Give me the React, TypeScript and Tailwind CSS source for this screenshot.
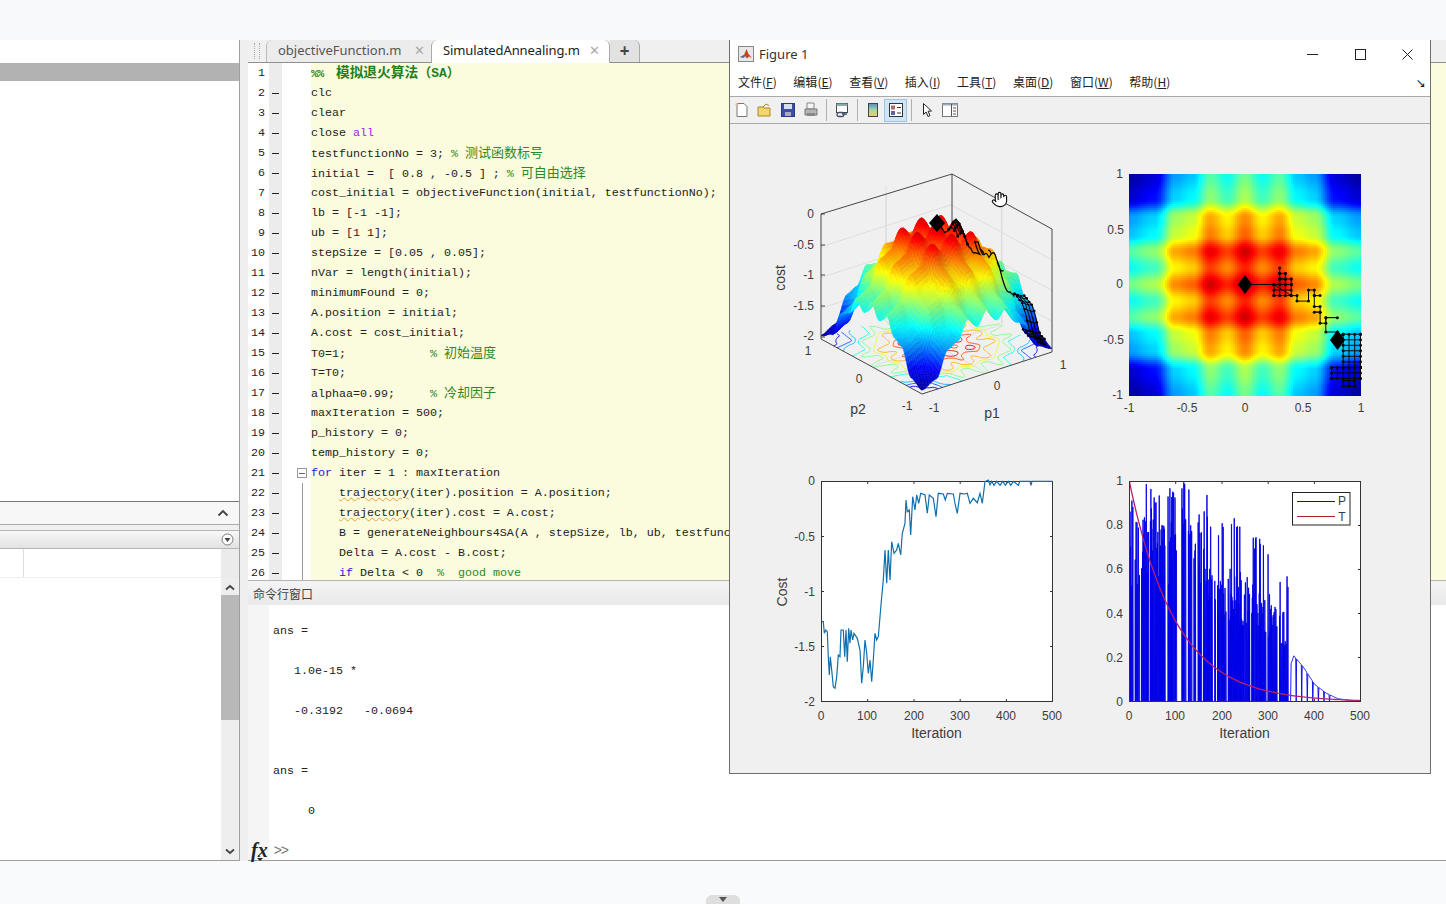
import React from "react";
import { Hand } from "lucide-react";

const clamp = (a: number) => Math.max(0, Math.min(1, a));
const jet = (v: number, s = 1) => {
  const r = clamp(1.5 - Math.abs(4 * v - 3));
  const g = clamp(1.5 - Math.abs(4 * v - 2));
  const b = clamp(1.5 - Math.abs(4 * v - 1));
  return `rgb(${Math.round(r * 255 * s)},${Math.round(g * 255 * s)},${Math.round(b * 255 * s)})`;
};
const ctrl: [number, number][] = [[0, 0.5], [0.15, 0.39], [0.3, 0.47], [0.45, 0.32], [0.6, 0.28], [0.78, 0.07], [1, 0.015]];
const h = (t0: number) => {
  const t = Math.min(1, Math.abs(t0));
  let i = 0;
  while (i < ctrl.length - 2 && t > ctrl[i + 1][0]) i++;
  const [a, av] = ctrl[i];
  const [b, bv] = ctrl[i + 1];
  const u = (t - a) / (b - a);
  const s = u * u * (3 - 2 * u);
  return av + (bv - av) * s;
};
const f = (x: number, y: number) => h(x) + h(y);
const proj = (p1: number, p2: number, v: number): [number, number] => [
  922 + ((p1 + 1) / 2) * 130 - ((p2 + 1) / 2) * 101,
  394 - ((p1 + 1) / 2) * 42 - ((p2 + 1) / 2) * 55 - v * 123,
];
const pts = (a: [number, number][]) => a.map((p) => `${p[0].toFixed(1)},${p[1].toFixed(1)}`).join(" ");

function buildSurface() {
  const N = 80;
  const out: { d: string; c: string }[] = [];
  for (let i = N - 1; i >= 0; i--) {
    for (let j = N - 1; j >= 0; j--) {
      const x0 = -1 + (2 * i) / N, x1 = -1 + (2 * (i + 1)) / N;
      const y0 = -1 + (2 * j) / N, y1 = -1 + (2 * (j + 1)) / N;
      const a = f(x0, y0), b = f(x1, y0), c = f(x1, y1), d = f(x0, y1);
      const m = (a + b + c + d) / 4;
      const dx = (b + c - a - d) / 2 / (x1 - x0);
      const dy = (c + d - a - b) / 2 / (y1 - y0);
      const shade = clamp(0.92 + 0.14 * dx - 0.08 * dy);
      out.push({ d: pts([proj(x0, y0, a), proj(x1, y0, b), proj(x1, y1, c), proj(x0, y1, d)]), c: jet(m * 0.95, 0.72 + 0.28 * shade) });
    }
  }
  return out;
}
function buildContours() {
  const N = 110;
  const out: { d: string; c: string }[] = [];
  for (let k = 1; k < 10; k++) {
    const L = k / 10;
    let d = "";
    for (let i = 0; i < N; i++) for (let j = 0; j < N; j++) {
      const x0 = -1 + (2 * i) / N, x1 = -1 + (2 * (i + 1)) / N;
      const y0 = -1 + (2 * j) / N, y1 = -1 + (2 * (j + 1)) / N;
      const c = [[x0, y0], [x1, y0], [x1, y1], [x0, y1]].map(([x, y]) => ({ x, y, v: f(x, y) }));
      const cross: [number, number][] = [];
      for (let e = 0; e < 4; e++) {
        const A = c[e], B = c[(e + 1) % 4];
        if (A.v < L !== B.v < L) {
          const u = (L - A.v) / (B.v - A.v);
          cross.push(proj(A.x + (B.x - A.x) * u, A.y + (B.y - A.y) * u, 0));
        }
      }
      if (cross.length >= 2) d += `M${cross[0][0].toFixed(1)} ${cross[0][1].toFixed(1)}L${cross[1][0].toFixed(1)} ${cross[1][1].toFixed(1)}`;
    }
    out.push({ d, c: jet(L) });
  }
  return out;
}
function buildHeat() {
  const out: { x: number; y: number; c: string }[] = [];
  for (let py = 174; py < 395; py += 2) for (let px = 1129; px < 1361; px += 2) {
    const x = ((px + 1 - 1129) / 232) * 2 - 1;
    const y = 1 - ((py + 1 - 174) / 221) * 2;
    out.push({ x: px, y: py, c: jet(f(x, y) * 0.95) });
  }
  return out;
}
const route: [number, number][] = [[0, 0], [0.25, 0], [0.4, -0.1], [0.45, -0.1], [0.45, -0.15], [0.55, -0.15], [0.55, -0.05], [0.6, -0.05], [0.6, -0.1], [0.65, -0.1], [0.6, -0.1], [0.6, -0.2], [0.65, -0.2], [0.65, -0.25], [0.6, -0.25], [0.65, -0.25], [0.65, -0.35], [0.7, -0.35], [0.7, -0.3], [0.8, -0.3], [0.7, -0.3], [0.7, -0.43], [0.8, -0.43], [0.8, -0.5], [0.85, -0.45]];
type Seg = [[number, number], [number, number]];
const grid = (x0: number, x1: number, y0: number, y1: number) => {
  const s: Seg[] = [];
  for (let x = x0; x <= x1 + 1e-6; x += 0.05) s.push([[x, y0], [x, y1]]);
  for (let y = y0; y <= y1 + 1e-6; y += 0.05) s.push([[x0, y], [x1, y]]);
  return s;
};
const segs: Seg[] = [
  ...grid(0.25, 0.4, -0.1, 0),
  ...grid(0.3, 0.4, 0, 0.05),
  ...grid(0.3, 0.35, 0.05, 0.1),
  [[0.3, 0.1], [0.3, 0.15]],
  ...grid(0.85, 1, -0.75, -0.45),
  ...grid(0.75, 1, -0.85, -0.75),
  ...grid(0.85, 0.95, -0.92, -0.85),
];
const segDots: [number, number][] = [];
segs.forEach(([a, b]) => { segDots.push(a, b); });
const h2 = (p: [number, number]): [number, number] => [1245 + p[0] * 115.5, 284.5 - p[1] * 110.5];
const h3 = (p: [number, number]): [number, number] => proj(p[0], p[1], f(p[0], p[1]));
const split = (q: [number, number], p: [number, number]) => {
  const a: [number, number][] = [q];
  for (let k = 1; k <= 4; k++) a.push([q[0] + ((p[0] - q[0]) * k) / 4, q[1] + ((p[1] - q[1]) * k) / 4]);
  return a;
};
const route3 = route.slice(1).flatMap((p, i) => split(route[i], p));
const seg3 = segs.map(([a, b]) => split(a, b));
const seg2d = segs.map(([a, b]) => { const p = h2(a), q = h2(b); return `M${p[0].toFixed(1)} ${p[1].toFixed(1)}L${q[0].toFixed(1)} ${q[1].toFixed(1)}`; }).join("");
const costZoom: [number, number][] = [[155, 455], [160, 455], [163, 490], [167, 480], [172, 485], [175, 560], [178, 615], [181, 560], [185, 600], [190, 650], [195, 655], [200, 620], [205, 555], [210, 560], [213, 480], [220, 480], [224, 560], [228, 480], [232, 575], [236, 475], [240, 520], [243, 480], [248, 510], [252, 490], [262, 505], [270, 540], [275, 640], [280, 590], [285, 510], [290, 550], [295, 610], [300, 570], [305, 635], [310, 570], [315, 490], [320, 510], [325, 500], [330, 440], [335, 380], [340, 330], [345, 240], [350, 340], [355, 240], [360, 330], [365, 215], [372, 250], [380, 240], [385, 220], [392, 255], [397, 190], [405, 160], [408, 90], [412, 125], [418, 120], [422, 195], [428, 80], [435, 120], [440, 75], [446, 100], [452, 70], [465, 75], [472, 130], [478, 75], [490, 85], [498, 140], [505, 70], [520, 72], [526, 90], [532, 70], [550, 72], [556, 105], [562, 130], [570, 70], [585, 72], [592, 70], [600, 100], [610, 85], [622, 98], [630, 70], [637, 100], [645, 35], [655, 30], [660, 45], [665, 34], [672, 46], [680, 34], [690, 46], [698, 34], [706, 46], [715, 34], [722, 46], [730, 34], [745, 46], [750, 34], [780, 34], [783, 46], [786, 34], [848, 34]];
const envC: [number, number][] = [[0, 1], [170, 1], [180, 0.76], [205, 0.86], [230, 0.84], [260, 0.78], [285, 0.74], [300, 0.69], [320, 0.61], [343, 0.57], [345, 0.15], [355, 0.21], [375, 0.16], [400, 0.08], [425, 0.04], [450, 0.015], [500, 0]];
const env = (i: number) => {
  for (let k = 0; k < envC.length - 1; k++) if (i <= envC[k + 1][0]) {
    const u = (i - envC[k][0]) / (envC[k + 1][0] - envC[k][0]);
    return envC[k][1] + (envC[k + 1][1] - envC[k][1]) * u;
  }
  return 0;
};
function buildP() {
  let seed = 98765;
  const r = () => { seed = (seed * 1664525 + 1013904223) % 4294967296; return seed / 4294967296; };
  const a: [number, number][] = [[1129.5, 702]];
  const X = (i: number) => 1129.5 + (i / 500) * 231.5;
  const Y = (v: number) => 702 - v * 220;
  let i = 0;
  while (i < 345) {
    const q = r();
    if (q < 0.1) {
      const run = 3 + Math.floor(r() * 3);
      a.push([X(i), Y(0)], [X(i + run), Y(0)]);
      i += run;
      continue;
    }
    let v: number;
    if (q < 0.32) v = env(i) * (0.9 + 0.1 * r());
    else v = env(i) * (0.5 + 0.35 * r()) * (i < 170 ? 1.05 : 0.85);
    a.push([X(i), Y(v)], [X(i + 0.5), Y(v)], [X(i + 1), Y(0)]);
    i += 1 + Math.floor(r() * 1.6);
  }
  for (; i <= 500; i += 1) {
    const drop = i < 435 && i % 12 < 1;
    a.push([X(i), Y(drop ? 0 : env(i))]);
  }
  return a;
}
const surface = buildSurface();
const contours = buildContours();
const heat = buildHeat();
const pLine = buildP();
const tLine: [number, number][] = Array.from({ length: 101 }, (_, k) => [1129.5 + (k / 100) * 231.5, 702 - Math.pow(0.99, k * 5) * 220]);

const Tick = ({ x, y, t, a = "middle" }: { x: number; y: number; t: string; a?: "middle" | "end" | "start" }) => (
  <text x={x} y={y + 4} textAnchor={a} fontSize={12} fill="#3c3c3c" fontFamily="'Liberation Sans', sans-serif">{t}</text>
);
const Label = ({ x, y, t, rot }: { x: number; y: number; t: string; rot?: boolean }) => (
  <text x={x} y={y} textAnchor="middle" fontSize={14} fill="#3c3c3c" fontFamily="'Liberation Sans', sans-serif" transform={rot ? `rotate(-90 ${x} ${y})` : undefined}>{t}</text>
);

function Plots() {
  return (
    <svg viewBox="730 124 700 649" className="w-[700px] h-[649px] block">
      <defs><filter id="soft" x="-5%" y="-5%" width="110%" height="110%"><feGaussianBlur stdDeviation="0.6" /></filter></defs>
      {/* 3D wall grid */}
      <g stroke="#d9d9d9" strokeWidth="0.8" fill="none">
        {[0.25, 0.5, 0.75].map((v) => (
          <polyline key={v} points={pts([proj(-1, 1, v * 1), proj(1, 1, v), proj(1, -1, v)])} />
        ))}
        <line x1="886" y1="186" x2="886" y2="318" />
        <line x1="1002" y1="202" x2="1002" y2="324" />
        <polyline points={pts([proj(0, -1, 0), proj(0, 1, 0), proj(0, 1, 1)])} />
        <polyline points={pts([proj(-1, 0, 0), proj(1, 0, 0), proj(1, 0, 1)])} />
      </g>
      {contours.map((c, i) => <path key={i} d={c.d} stroke={c.c} strokeWidth="0.9" fill="none" />)}
      <g stroke="#333" strokeWidth="0.9" fill="none">
        <polyline points="821,339 821,214 952,174 1052,229 1052,352" />
        <line x1="952" y1="174" x2="952" y2="296" />
        <polyline points="821,339 922,394 1052,352" />
      </g>
      <g filter="url(#soft)">
        {surface.map((s, i) => <polygon key={i} points={s.d} fill={s.c} stroke={s.c} strokeWidth="0.5" />)}
      </g>
      <polyline points={pts(route3.map(h3))} fill="none" stroke="#000" strokeWidth="1.2" />
      {seg3.map((s, i) => <polyline key={i} points={pts(s.map(h3))} fill="none" stroke="#000" strokeWidth="1" />)}
      {segDots.map((p, i) => { const q = h3(p); return <circle key={i} cx={q[0]} cy={q[1]} r="1.2" fill="#000" />; })}
      <polygon points="937,214 945,223 937,232 929,223" fill="#000" />
      <g stroke="#333" strokeWidth="0.9">
        {[214, 245, 275, 306, 337].map((y) => <line key={y} x1="821" y1={y} x2="825" y2={y + 0} />)}
      </g>
      <Hand x={991} y={191} width={17} height={17} stroke="#111" fill="#fff" strokeWidth={1.6} />
      <Tick x={814} y={214} t="0" a="end" /><Tick x={814} y={245} t="-0.5" a="end" /><Tick x={814} y={275} t="-1" a="end" /><Tick x={814} y={306} t="-1.5" a="end" /><Tick x={814} y={336} t="-2" a="end" />
      <Label x={785} y={278} t="cost" rot />
      <Tick x={808} y={351} t="1" /><Tick x={859} y={379} t="0" /><Tick x={907} y={406} t="-1" /><Tick x={934} y={408} t="-1" /><Tick x={997} y={386} t="0" /><Tick x={1063} y={365} t="1" />
      <Label x={858} y={414} t="p2" /><Label x={992} y={418} t="p1" />

      {/* Heat map */}
      <g shapeRendering="crispEdges">
        {heat.map((r, i) => <rect key={i} x={r.x} y={r.y} width="2" height="2" fill={r.c} />)}
      </g>
      <polyline points={pts(route.map(h2))} fill="none" stroke="#0a0a0a" strokeWidth="1" />
      <path d={seg2d} fill="none" stroke="#0a0a0a" strokeWidth="1" />
      {[...route, ...segDots].map((p, i) => { const q = h2(p); return <circle key={i} cx={q[0]} cy={q[1]} r="1.5" fill="#0a0a0a" />; })}
      <polygon points="1245,275 1252,284.5 1245,294 1238,284.5" fill="#000" />
      <polygon points="1337.5,330 1345,340 1337.5,350 1330,340" fill="#000" />
      <Tick x={1123} y={174} t="1" a="end" /><Tick x={1124} y={230} t="0.5" a="end" /><Tick x={1123} y={284} t="0" a="end" /><Tick x={1124} y={340} t="-0.5" a="end" /><Tick x={1123} y={395} t="-1" a="end" />
      <Tick x={1129} y={408} t="-1" /><Tick x={1187} y={408} t="-0.5" /><Tick x={1245} y={408} t="0" /><Tick x={1303} y={408} t="0.5" /><Tick x={1361} y={408} t="1" />

      {/* Cost */}
      <rect x="821.5" y="481.5" width="231" height="220" fill="#fff" stroke="#333" strokeWidth="1" />
      <g stroke="#333" strokeWidth="1">
        {[867.7, 914, 960.2, 1006.4].map((x) => <g key={x}><line x1={x} y1="701" x2={x} y2="699" /><line x1={x} y1="482" x2={x} y2="484" /></g>)}
        {[536.5, 591.5, 646.5].map((y) => <g key={y}><line x1="822" y1={y} x2="824" y2={y} /><line x1="1052" y1={y} x2="1050" y2={y} /></g>)}
      </g>
      <polyline points={pts(costZoom.map(([x, y]) => [770 + x / 3, 470 + y / 3] as [number, number]))} fill="none" stroke="#0f70b0" strokeWidth="1.2" />
      <Tick x={815} y={481} t="0" a="end" /><Tick x={815} y={537} t="-0.5" a="end" /><Tick x={815} y={592} t="-1" a="end" /><Tick x={815} y={647} t="-1.5" a="end" /><Tick x={815} y={702} t="-2" a="end" />
      {[["0", 821], ["100", 867], ["200", 914], ["300", 960], ["400", 1006], ["500", 1052]].map(([t, x]) => <Tick key={t} x={Number(x)} y={716} t={String(t)} />)}
      <Label x={787} y={592} t="Cost" rot /><Label x={936.5} y={738} t="Iteration" />

      {/* P / T */}
      <rect x="1129.5" y="481.5" width="231" height="220" fill="#fff" />
      <svg x="1129.5" y="481.5" width="231" height="220" viewBox="1129.5 481.5 231 220">
        <polyline points={pts(pLine)} fill="none" stroke="#0000e6" strokeWidth="0.9" />
        <polyline points={pts(tLine)} fill="none" stroke="#b8206a" strokeWidth="1.3" />
      </svg>
      <rect x="1129.5" y="481.5" width="231" height="220" fill="none" stroke="#333" strokeWidth="1" />
      <g stroke="#333" strokeWidth="1">
        {[1175.7, 1222, 1268.2, 1314.4].map((x) => <g key={x}><line x1={x} y1="701" x2={x} y2="699" /><line x1={x} y1="482" x2={x} y2="484" /></g>)}
        {[525.5, 569.5, 613.5, 657.5].map((y) => <line key={y} x1="1360" y1={y} x2="1358" y2={y} />)}
      </g>
      <rect x="1292.5" y="492.5" width="57.5" height="32.5" fill="#fff" stroke="#222" strokeWidth="1" />
      <line x1="1297" y1="501.5" x2="1335" y2="501.5" stroke="#1c1c50" strokeWidth="1" />
      <line x1="1297" y1="516.5" x2="1335" y2="516.5" stroke="#b0202a" strokeWidth="1" />
      <Tick x={1342} y={501} t="P" /><Tick x={1342} y={517} t="T" />
      {[["1", 481], ["0.8", 525], ["0.6", 569], ["0.4", 614], ["0.2", 658], ["0", 702]].map(([t, y]) => <Tick key={String(t)} x={1123} y={Number(y)} t={String(t)} a="end" />)}
      {[["0", 1129], ["100", 1175], ["200", 1222], ["300", 1268], ["400", 1314], ["500", 1360]].map(([t, x]) => <Tick key={String(t)} x={Number(x)} y={716} t={String(t)} />)}
      <Label x={1244.5} y={738} t="Iteration" />
    </svg>
  );
}

type Part = [string, string?];
const G = "text-[#2a8a2a]", K = "text-[#1a1ae6]", P = "text-[#a020f0]";
const code: Part[][] = [
  [["%%  ", `text-[#1f7f1f] font-bold tracking-[-0.75px]`], ["模拟退火算法", `text-[#1f7f1f] font-bold cjkb`], ["（", `text-[#1f7f1f] font-bold cjk`], ["SA", `text-[#1f7f1f] font-bold text-[13px]`], ["）", `text-[#1f7f1f] font-bold cjk`]],
  [["clc"]], [["clear"]], [["close "], ["all", P]],
  [["testfunctionNo = 3; "], ["% ", G], ["测试函数标号", `${G} cjk`]],
  [["initial =  [ 0.8 , -0.5 ] ; "], ["% ", G], ["可自由选择", `${G} cjk`]],
  [["cost_initial = objectiveFunction(initial, testfunctionNo);"]],
  [["lb = [-1 -1];"]], [["ub = [1 1];"]], [["stepSize = [0.05 , 0.05];"]], [["nVar = length(initial);"]],
  [["minimumFound = 0;"]], [["A.position = initial;"]], [["A.cost = cost_initial;"]],
  [["T0=1;            "], ["% ", G], ["初始温度", `${G} cjk`]],
  [["T=T0;"]],
  [["alphaa=0.99;     "], ["% ", G], ["冷却因子", `${G} cjk`]],
  [["maxIteration = 500;"]], [["p_history = 0;"]], [["temp_history = 0;"]],
  [["for", K], [" iter = 1 : maxIteration"]],
  [["    "], ["trajectory", "wavy"], ["(iter).position = A.position;"]],
  [["    "], ["trajectory", "wavy"], ["(iter).cost = A.cost;"]],
  [["    B = generateNeighbours4SA(A , stepSize, lb, ub, testfunctionNo);"]],
  [["    Delta = A.cost - B.cost;"]],
  [["    "], ["if", K], [" Delta < 0  "], ["%  good move", G]],
];
const mono = "font-['Liberation_Mono','Noto_Sans_CJK_SC',monospace] text-[11.67px]";

function Part({ p }: { p: Part }) {
  const c = p[1] ?? "";
  if (c === "wavy") return <span className="underline decoration-wavy decoration-[#e8a33a] decoration-1">{p[0]}</span>;
  if (c.includes("cjkb")) return <span className={`${c.replace("cjkb", "")} text-[13.7px]`}>{p[0]}</span>;
  if (c.includes("cjk")) return <span className={`${c.replace("cjk", "")} text-[13px]`}>{p[0]}</span>;
  return <span className={c}>{p[0]}</span>;
}

function Editor() {
  return (
    <div className="h-[540px] flex flex-col overflow-hidden">
      <div className="h-[23px] shrink-0 flex bg-[#f0f0f0] border-b border-[#8f8f8f] font-['Noto_Sans',sans-serif] text-[13px] text-[#333] leading-[21px]">
        <div className="w-[18px] flex items-center justify-center"><div className="w-[6px] h-[16px] border-x border-dotted border-[#aaa]" /></div>
        <div className="w-[165px] pl-[11px] flex justify-between pr-[6px] border-l border-[#bbb] rounded-tl-md bg-[#ececec] text-[#555]"><span>objectiveFunction.m</span><span className="text-[#aaa]">✕</span></div>
        <div className="w-[179px] pl-[11px] pr-[9px] flex justify-between bg-white border-x border-[#aaa] rounded-t-md h-[23px] text-[#222]"><span className="tracking-[-0.1px]">SimulatedAnnealing.m</span><span className="text-[#aaa]">✕</span></div>
        <div className="w-[30px] text-center bg-[#e2e2e2] border-r border-[#aaa] rounded-tr-md text-[17px] font-bold text-[#444]">+</div>
      </div>
      <div className={`${mono} text-[#222] leading-[21px] whitespace-pre`}>
        {code.map((row, i) => (
          <div key={i} className="flex h-[20px]">
            <div className="w-[17px] text-right bg-white">{i + 1}</div>
            <div className="w-[4px] bg-white" />
            <div className="w-[13px] bg-[#ececec] flex items-center">{i > 0 && <div className="w-[7px] h-px ml-[3px] mt-[1px] bg-[#222]" />}</div>
            <div className="w-[29px] bg-white relative">
              {i === 20 && <div className="absolute left-[15px] top-[5px] w-[10px] h-[10px] border border-[#999] flex items-center justify-center"><div className="w-[6px] h-px bg-[#666]" /></div>}
              {i > 20 && <div className="absolute left-[20px] top-0 h-full w-px bg-[#999]" />}
            </div>
            <div className="flex-1 bg-[#fbfbdd] overflow-hidden">{row.map((p, k) => <Part key={k} p={p} />)}</div>
          </div>
        ))}
      </div>
    </div>
  );
}

function Command() {
  const lines: [number, string][] = [[0, "ans ="], [1, ""], [3, "1.0e-15 *"], [1, ""], [3, "-0.3192   -0.0694"], [1, ""], [1, ""], [0, "ans ="], [1, ""], [5, "0"]];
  return (
    <div className="h-[281px] flex flex-col border-t border-[#b5b5b5] border-b-[#9a9a9a] border-b relative">
      <div className="h-[24px] pl-[5px] bg-gradient-to-b from-[#f4f4f4] to-[#e9e9e9] text-[12px] leading-[26px] text-[#444] font-['Noto_Sans_CJK_SC',sans-serif]">命令行窗口</div>
      <div className="flex-1 flex bg-white overflow-hidden">
        <div className="w-[21px] bg-[#f5f5f5]" />
        <div className={`pl-[4px] pt-[16px] ${mono} leading-[21px] text-[#222] whitespace-pre`}>
          {lines.map(([n, t], i) => <div key={i} className="h-[20px]">{" ".repeat(n)}{t}</div>)}
        </div>
      </div>
      <div className="absolute left-[3px] bottom-[0px] flex items-center gap-[6px]">
        <span className="relative font-['Liberation_Serif',serif] italic font-bold text-[20px] leading-[20px] text-[#222]">
          fx
          <span className="absolute left-[6px] -bottom-[1px] w-0 h-0 border-x-[3px] border-x-transparent border-t-[3px] border-t-[#222]" />
        </span>
        <span className="text-[#777] text-[14px] leading-[20px] font-['Liberation_Sans',sans-serif] tracking-[-1px]">&gt;&gt;</span>
      </div>
    </div>
  );
}

function Left() {
  return (
    <div className="w-[240px] flex flex-col bg-white border-r border-[#9f9f9f] border-b h-[821px]">
      <div className="h-[23px] bg-white" />
      <div className="h-[18px] bg-[#b2b2b2]" />
      <div className="flex-1 border-b border-[#777] bg-white" />
      <div className="h-[23px] flex items-center justify-end pr-[10px] bg-[#f7f7f7] border-b border-[#aaa]">
        <svg width="12" height="8" viewBox="0 0 12 8"><path d="M1.5 6.5L6 2l4.5 4.5" fill="none" stroke="#444" strokeWidth="1.8" /></svg>
      </div>
      <div className="h-[5px] bg-[#f0f0f0]" />
      <div className="h-[19px] flex items-center justify-end pr-[5px] bg-gradient-to-b from-[#f8f8f8] to-[#e2e2e2] border-y border-[#b5b5b5]">
        <svg width="13" height="13" viewBox="0 0 13 13"><circle cx="6.5" cy="6.5" r="5.5" fill="#fff" stroke="#777" /><path d="M3.5 5h6l-3 4z" fill="#444" /></svg>
      </div>
      <div className="h-[311px] flex bg-white" >
        <div className="flex-1 flex flex-col">
          <div className="h-[29px] flex border-b border-[#eee]"><div className="w-[24px] border-r border-[#ddd]" /></div>
        </div>
        <div className="w-[18px] flex flex-col items-center bg-[#eeeeee]">
          <div className="h-[29px] w-full bg-[#ebebeb]" />
          <svg className="mt-[6px]" width="10" height="7" viewBox="0 0 10 7"><path d="M1 5.5L5 2l4 3.5" fill="none" stroke="#444" strokeWidth="1.8" /></svg>
          <div className="w-full h-[125px] mt-[4px] bg-[#b8b8b8]" />
          <div className="flex-1" />
          <svg className="mb-[5px]" width="10" height="7" viewBox="0 0 10 7"><path d="M1 1.5L5 5l4-3.5" fill="none" stroke="#444" strokeWidth="1.8" /></svg>
        </div>
      </div>
    </div>
  );
}

const Menu = ({ a, k }: { a: string; k: string }) => <span>{a}(<span className="underline">{k}</span>)</span>;
const Sep = () => <div className="w-px h-[22px] mx-[3.5px] bg-[#b0b0b0]" />;
const Ic = ({ children, on }: { children: React.ReactNode; on?: boolean }) => (
  <div className={`w-[23px] h-[23px] flex items-center justify-center ${on ? "bg-[#cfe4f5] border border-[#9cc4e4]" : ""}`}>
    {children}
  </div>
);

function Figure() {
  return (
    <div className="absolute left-[729px] top-[40px] w-[702px] h-[734px] bg-[#f0f0f0] border border-[#6e6e6e] border-t-0 flex flex-col font-['Noto_Sans',sans-serif]">
      <div className="h-[28px] bg-white flex items-center pl-[8px]">
        <svg width="16" height="16" viewBox="0 0 16 16"><rect x="0.5" y="0.5" width="15" height="15" fill="#e8e8e8" stroke="#888" /><path d="M2 11l4-2 2.5-6 2 5 3.5 4-3-1.5-2 2-2-2.5z" fill="#c8421a" /><path d="M2 11l4-2 1 2-2 1z" fill="#3f6fa8" /></svg>
        <span className="ml-[5px] text-[13px] text-[#333] leading-[30px]">Figure 1</span>
        <div className="flex-1" />
        <svg className="mr-[37px]" width="11" height="11" viewBox="0 0 11 11"><path d="M0 5.5h11" stroke="#222" /></svg>
        <svg className="mr-[36px]" width="11" height="11" viewBox="0 0 11 11"><rect x="0.5" y="0.5" width="10" height="10" fill="none" stroke="#222" /></svg>
        <svg className="mr-[17px]" width="11" height="11" viewBox="0 0 11 11"><path d="M0.5 0.5l10 10M10.5 0.5l-10 10" stroke="#222" /></svg>
      </div>
      <div className="h-[29px] bg-white border-b border-[#a8a8a8] flex items-center pl-[8px] gap-[16.6px] text-[12px] text-[#222] relative font-['Noto_Sans_CJK_SC',sans-serif]">
        <Menu a="文件" k="F" /><Menu a="编辑" k="E" /><Menu a="查看" k="V" /><Menu a="插入" k="I" /><Menu a="工具" k="T" /><Menu a="桌面" k="D" /><Menu a="窗口" k="W" /><Menu a="帮助" k="H" />
        <span className="absolute right-[4px] top-[8px] text-[10px] font-bold">↘</span>
      </div>
      <div className="h-[27px] bg-[#f0f0f0] border-b border-[#a8a8a8] flex items-center">
        <Ic><svg width="16" height="16" viewBox="0 0 16 16"><path d="M3 1.5h7l3 3v10H3z" fill="#fff" stroke="#777" /><circle cx="3" cy="2.5" r="1.5" fill="#e8b0a0" /></svg></Ic>
        <Ic><svg width="16" height="16" viewBox="0 0 16 16"><path d="M1 5h5l1 1h6v8H1z" fill="#f2d56b" stroke="#a88a2a" /><path d="M6 5l3-3 3 1.5" fill="none" stroke="#a88a2a" /></svg></Ic>
        <Ic><svg width="16" height="16" viewBox="0 0 16 16"><rect x="1.5" y="1.5" width="13" height="13" fill="#3d4fa3" stroke="#2b3a80" /><rect x="4" y="2" width="8" height="5" fill="#d8dcf0" /><rect x="5" y="10" width="6" height="4" fill="#aab" /></svg></Ic>
        <Ic><svg width="16" height="16" viewBox="0 0 16 16"><path d="M4 1h7v6H4z" fill="#f4f4f4" stroke="#888" /><path d="M2 7h12v6H2z" fill="#b5b5b5" stroke="#777" /><rect x="4" y="11" width="8" height="3" fill="#888" /></svg></Ic>
        <Sep />
        <Ic><svg width="16" height="16" viewBox="0 0 16 16"><rect x="2.5" y="1.5" width="11" height="9" fill="#fff" stroke="#445" /><rect x="2.5" y="1.5" width="11" height="2.5" fill="#8aa" /><path d="M3 12.5a2 2 0 012-2h3a2 2 0 010 4H5a2 2 0 01-2-2zM8 12h5" fill="none" stroke="#456" strokeWidth="1.3" /></svg></Ic>
        <Sep />
        <Ic><svg width="16" height="16" viewBox="0 0 16 16"><defs><linearGradient id="cb" x1="0" x2="0" y1="0" y2="1"><stop offset="0" stopColor="#4d8fd0" /><stop offset="0.5" stopColor="#a8d8a0" /><stop offset="1" stopColor="#f0d060" /></linearGradient></defs><rect x="3.5" y="1.5" width="9" height="13" fill="url(#cb)" stroke="#444" /></svg></Ic>
        <Ic on><svg width="16" height="16" viewBox="0 0 16 16"><rect x="1.5" y="1.5" width="13" height="13" fill="#fff" stroke="#333" /><rect x="3" y="3.5" width="4" height="4" fill="#b56a6a" /><rect x="3" y="9" width="4" height="4" fill="#5a62a8" /><path d="M9 5.5h4M9 11h4" stroke="#333" /></svg></Ic>
        <Sep />
        <Ic><svg width="16" height="16" viewBox="0 0 16 16"><path d="M4.5 1.5v11l2.7-2.5 1.8 4.5 2-.9-1.9-4.4 3.4-.2z" fill="#fff" stroke="#222" strokeWidth="1" /></svg></Ic>
        <Ic><svg width="16" height="16" viewBox="0 0 16 16"><rect x="0.5" y="1.5" width="15" height="13" fill="#fff" stroke="#777" /><rect x="0.5" y="1.5" width="15" height="2" fill="#9ab" /><path d="M9.5 2v12M11 6h3M11 9h3M11 12h3" stroke="#555" /></svg></Ic>
      </div>
      <Plots />
    </div>
  );
}

export default function App() {
  return (
    <div className="w-[1446px] h-[904px] relative overflow-hidden bg-[#f8fafb] flex flex-col">
      <div className="h-[40px] bg-[#f7f9fb]" />
      <div className="flex h-[821px] bg-[#efefef]">
        <Left />
        <div className="flex-1 ml-[8px] flex flex-col">
          <Editor />
          <Command />
        </div>
      </div>
      <div className="flex-1 flex justify-center items-end">
        <div className="w-[34px] h-[9px] bg-[#dedede] rounded-t-md flex items-center justify-center"><div className="w-0 h-0 border-x-[4px] border-x-transparent border-t-[5px] border-t-[#555]" /></div>
      </div>
      <Figure />
    </div>
  );
}
